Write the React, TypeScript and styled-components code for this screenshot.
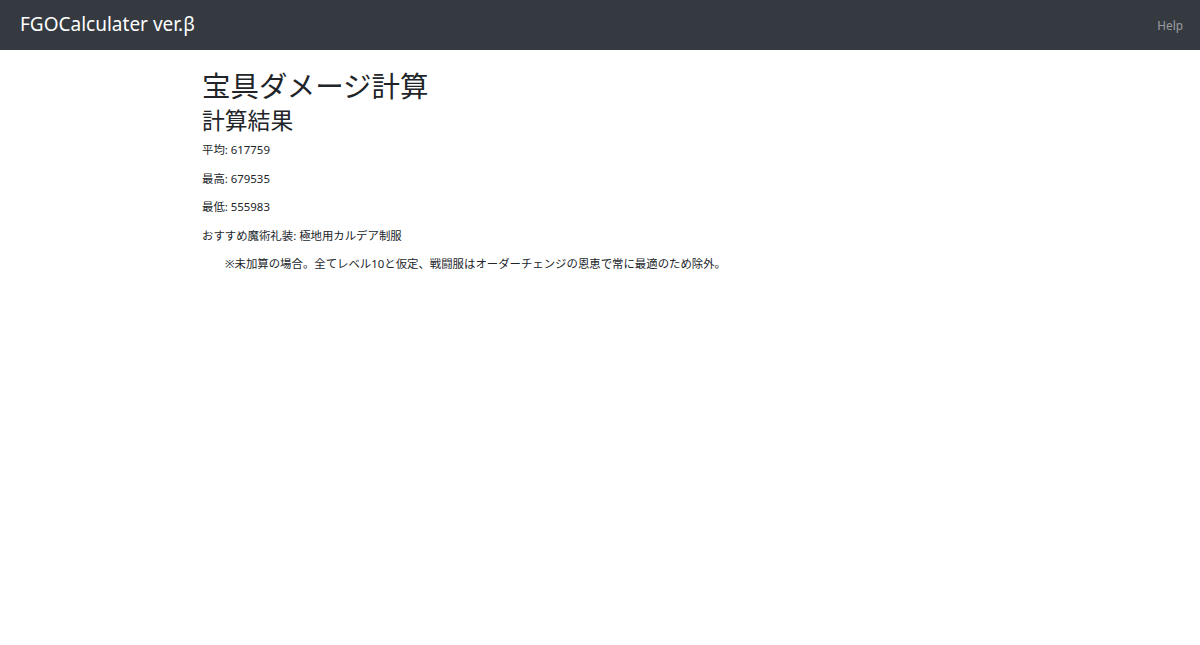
import styled, { createGlobalStyle } from "styled-components";

const GlobalStyle = createGlobalStyle`
  body {
    margin: 0;
    background: #fff;
    color: #212529;
    font-family: "Noto Sans", "Noto Sans CJK JP", sans-serif;
  }
`;

const results = [
  { label: "平均", value: "617759" },
  { label: "最高", value: "679535" },
  { label: "最低", value: "555983" },
  { label: "おすすめ魔術礼装", value: "極地用カルデア制服" },
];

const App = () => {
  return (
    <>
      <GlobalStyle />
      <NavBar>
        <Brand href="#">FGOCalculater ver.β</Brand>
        <NavLink href="#">Help</NavLink>
      </NavBar>
      <Main>
        <Title>宝具ダメージ計算</Title>
        <SubTitle>計算結果</SubTitle>
        {results.map(({ label, value }) => (
          <Line key={label}>
            {label}: {value}
          </Line>
        ))}
        <Note>
          ※未加算の場合。全てレベル10と仮定、戦闘服はオーダーチェンジの恩恵で常に最適のため除外。
        </Note>
      </Main>
    </>
  );
};

const NavBar = styled.nav`
  display: flex;
  align-items: center;
  justify-content: space-between;
  height: 50px;
  padding: 0 17px 0 20px;
  background: #343a40;
  box-sizing: border-box;
`;
const Brand = styled.a`
  color: #fff;
  font-size: 19px;
  text-decoration: none;
  margin-top: -2px;
`;
const NavLink = styled.a`
  color: rgba(255, 255, 255, 0.5);
  font-size: 11.8px;
  text-decoration: none;
`;
const Main = styled.main`
  padding: 17px 0 0 202px;
`;
const Title = styled.h1`
  margin: 0;
  font-size: 28.5px;
  font-weight: 400;
  line-height: 38px;
`;
const SubTitle = styled.h2`
  margin: 0 0 4px;
  font-size: 22.8px;
  font-weight: 400;
  line-height: 32px;
`;
const Line = styled.p`
  margin: 0 0 10.5px;
  font-size: 11.4px;
  line-height: 18px;
`;
const Note = styled(Line)`
  padding-left: 23px;
`;

export default App;
